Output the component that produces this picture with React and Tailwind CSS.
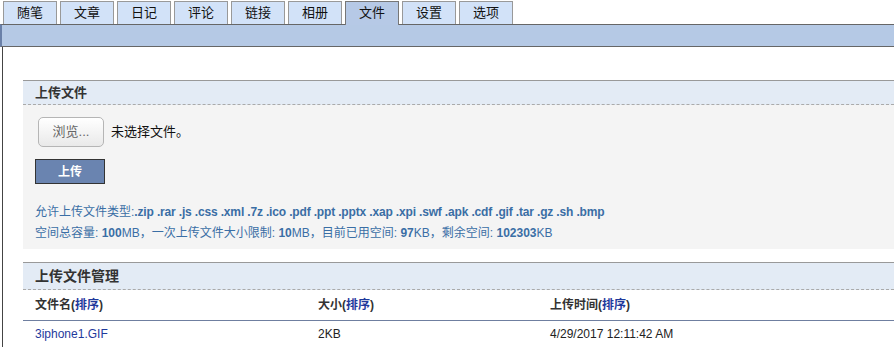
const tabs = ["随笔", "文章", "日记", "评论", "链接", "相册", "文件", "设置", "选项"];
const types = ".zip .rar .js .css .xml .7z .ico .pdf .ppt .pptx .xap .xpi .swf .apk .cdf .gif .tar .gz .sh .bmp";

function Sort() {
  return (
    <>
      (<span className="text-[#1f3a9c]">排序</span>)
    </>
  );
}

export default function App() {
  return (
    <div className="w-[894px] h-[347px] overflow-hidden bg-white font-['Liberation_Sans','Noto_Sans_CJK_SC',sans-serif] text-[12px] text-[#222]">
      <div className="flex gap-[3px] pl-[3px] pt-px">
        {tabs.map((t) => (
          <div
            key={t}
            className={
              t === "文件"
                ? "relative z-10 -mb-px flex h-[24px] w-[54px] items-center justify-center border border-b-0 border-[#777] bg-[#b6c9e6] pb-px text-[13px] text-[#111]"
                : "flex h-[23px] w-[54px] items-center justify-center border border-b-0 border-[#999] bg-[#d2e2f8] text-[13px] text-[#111]"
            }
          >
            {t}
          </div>
        ))}
      </div>
      <div className="h-[23px] border-y border-[#666] border-l-2 border-l-[#6a80a8] bg-[#b5c9e5]" />

      <div className="ml-[2px] h-[300px] border-l border-[#444] pl-[20px] pt-[33px]">
        <div className="flex h-[25px] items-center border-t border-b border-dashed border-[#aaa] [border-top-style:solid] [border-top-color:#999] bg-[#e3ebf5] pl-[12px] text-[13px] font-bold text-[#333]">
          上传文件
        </div>
        <div className="h-[144px] bg-[#f4f4f4] pl-[12px] pt-[12px]">
          <div className="flex items-center">
            <button className="ml-[3px] h-[30px] w-[66px] rounded-[5px] border border-[#b5b5b5] bg-gradient-to-b from-white to-[#e9e9e9] text-[13px] text-[#666]">
              浏览...
            </button>
            <span className="ml-[7px] text-[13px] text-[#111]">未选择文件。</span>
          </div>
          <button className="mt-[12px] flex h-[25px] w-[70px] items-center justify-center border border-[#333] bg-[#6a84b0] text-[12px] font-bold text-white">
            上传
          </button>
          <div className="mt-[18px] leading-[21px] text-[#3a6ea5]">
            <div>
              允许上传文件类型:<b className="tracking-[-0.16px]">{types}</b>
            </div>
            <div>
              空间总容量: <b>100</b>MB，一次上传文件大小限制: <b>10</b>MB，目前已用空间: <b>97</b>KB，剩余空间: <b>102303</b>KB
            </div>
          </div>
        </div>

        <div className="mt-[13px] flex h-[28px] items-center border-t border-b border-dashed border-[#aaa] [border-top-style:solid] [border-top-color:#999] bg-[#e3ebf5] pl-[12px] text-[14px] font-bold text-[#333]">
          上传文件管理
        </div>
        <div className="flex h-[31px] items-center border-b border-[#6f7fa0] pl-[12px] font-bold text-[#333]">
          <div className="w-[283px]">
            文件名<Sort />
          </div>
          <div className="w-[232px]">
            大小<Sort />
          </div>
          <div>
            上传时间<Sort />
          </div>
        </div>
        <div className="flex h-[27px] items-center border-b border-[#e2e2e2] pl-[12px] text-[#222]">
          <div className="w-[283px] text-[#1f3a9c]">3iphone1.GIF</div>
          <div className="w-[232px]">2KB</div>
          <div>4/29/2017 12:11:42 AM</div>
        </div>
      </div>
    </div>
  );
}
